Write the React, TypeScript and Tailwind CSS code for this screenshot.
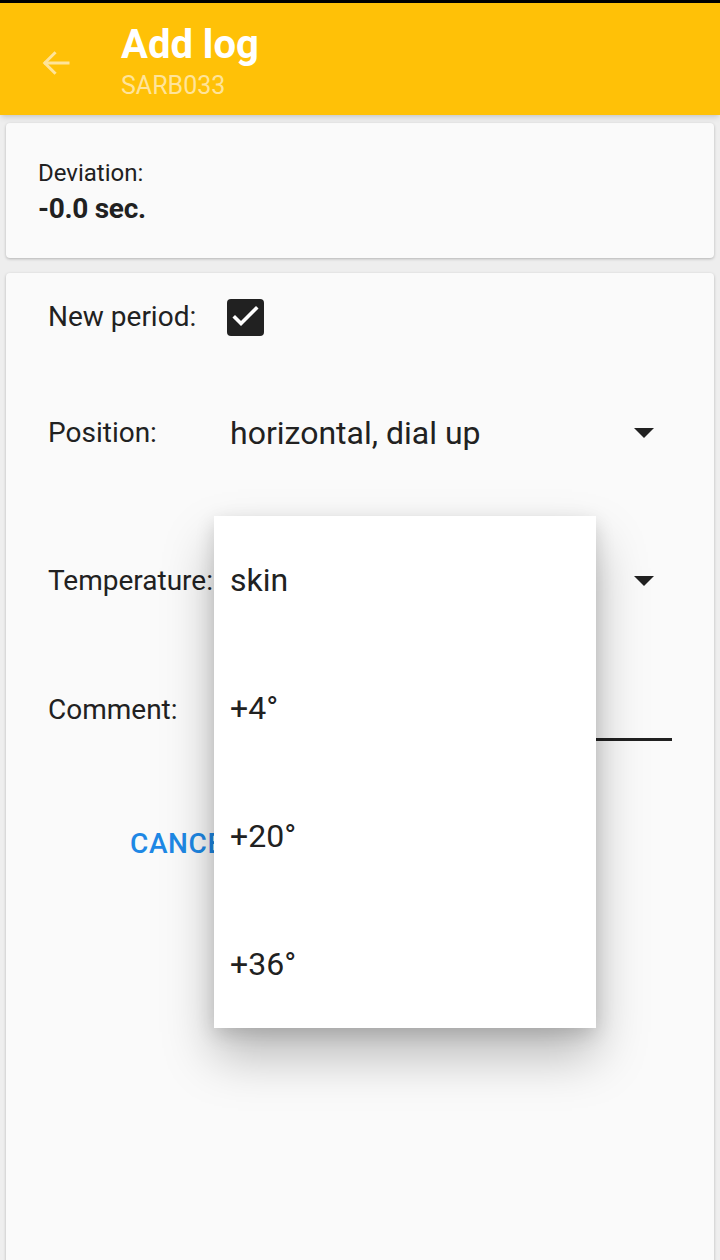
import React from 'react';

const font = { fontFamily: 'Roboto, "Noto Sans", sans-serif' };

const Caret = () => (
  <svg width="20" height="10" viewBox="0 0 20 10" className="shrink-0">
    <path d="M0 0 L20 0 L10 10 Z" fill="#212121" />
  </svg>
);

const options = ['skin', '+4°', '+20°', '+36°'];

const App: React.FC = () => {
  return (
    <div className="w-[720px] h-[1260px] overflow-hidden bg-[#eeeeee] text-[#212121] relative" style={font}>
      {/* status bar strip */}
      <div className="h-[3px] bg-black" />

      {/* App bar */}
      <header className="h-[112px] bg-[#ffc107] flex items-start shadow-md relative z-10">
        <div className="w-[121px] pl-[38px] pt-[42px]">
          <svg width="36" height="36" viewBox="0 0 24 24" fill="none" stroke="#ffe49a" strokeWidth="2" strokeLinecap="square">
            <path d="M20 12H5" />
            <path d="M11 5.5L4.5 12L11 18.5" />
          </svg>
        </div>
        <div className="flex flex-col pt-[16px]">
          <h1 className="text-[40px] leading-[52px] font-bold text-white">Add log</h1>
          <p className="text-[25px] leading-[30px] text-[#ffe49a]">SARB033</p>
        </div>
      </header>

      <main className="px-[6px] pt-[8px] flex flex-col gap-[15px]">
        {/* Deviation card */}
        <section className="h-[135px] bg-[#fafafa] rounded-[4px] shadow-[0_1px_3px_rgba(0,0,0,0.25)] px-[32px] pt-[36px]">
          <p className="text-[24px] leading-[28px]">Deviation:</p>
          <p className="text-[28px] leading-[36px] font-bold mt-[4px] tracking-[-0.3px]">-0.0 sec.</p>
        </section>

        {/* Form card */}
        <section className="h-[1000px] bg-[#fafafa] rounded-[4px] shadow-[0_1px_3px_rgba(0,0,0,0.25)] pl-[42px] pr-[42px] pt-[26px]">
          <div className="flex items-center h-[36px]">
            <span className="w-[179px] text-[28px]">New period:</span>
            <div className="w-[37px] h-[37px] rounded-[4px] bg-[#212121]">
              <svg width="37" height="37" viewBox="0 0 37 37" fill="none" stroke="#fff" strokeWidth="3.6" strokeLinecap="square">
                <path d="M8 18.5L14 24.5L29 9.5" />
              </svg>
            </div>
          </div>

          <div className="flex items-center h-[40px] mt-[78px]">
            <span className="w-[182px] text-[28px]">Position:</span>
            <span className="flex-1 text-[32px]">horizontal, dial up</span>
            <div className="pr-[18px]"><Caret /></div>
          </div>

          <div className="flex items-center h-[40px] mt-[108px]">
            <span className="w-[182px] text-[28px]">Temperature:</span>
            <span className="flex-1 text-[32px]">skin</span>
            <div className="pr-[18px]"><Caret /></div>
          </div>

          <div className="flex items-center h-[40px] mt-[89px]">
            <span className="w-[182px] text-[28px]">Comment:</span>
          </div>
          <div className="ml-[182px] h-[3px] bg-[#212121] mt-[8px]" />

          <div className="flex items-center mt-[82px] pl-[82px]">
            <button className="text-[28px] font-medium text-[#1e88e5] tracking-[0.6px]">CANCEL</button>
          </div>
        </section>
      </main>

      {/* Open dropdown menu */}
      <ul className="absolute left-[214px] top-[516px] w-[382px] bg-white shadow-[0_28px_48px_rgba(0,0,0,0.26),0_6px_18px_rgba(0,0,0,0.14)] z-20">
        {options.map((o) => (
          <li key={o} className="h-[128px] flex items-center pl-[16px] text-[32px] text-[#212121]">
            {o}
          </li>
        ))}
      </ul>
    </div>
  );
};

export default App;
